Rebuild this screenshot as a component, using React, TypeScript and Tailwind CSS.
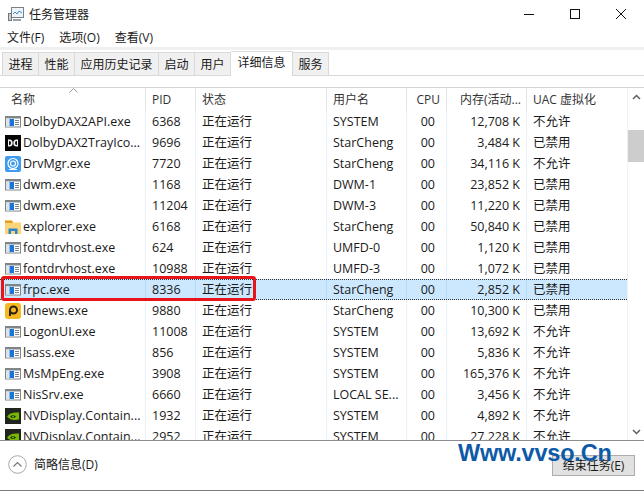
import React from "react";

const FONT = "font-['Open_Sans','Noto_Sans_CJK_SC',sans-serif]";

function ExeIcon() {
  return (
    <svg width="16" height="16" viewBox="0 0 16 16" className="shrink-0">
      <rect x="0" y="2" width="16" height="11.500" fill="#7f868a" />
      <rect x="1" y="4.500" width="14" height="8" fill="#ffffff" />
      <rect x="1" y="4.500" width="3" height="8" fill="#dfe3e6" />
      <rect x="4.500" y="5" width="4.500" height="7" fill="#1976d8" />
      <path d="M10 6.500h4M10 8.500h4M10 10.500h4" stroke="#7d8488" strokeWidth="1" />
    </svg>
  );
}
function DolbyIcon() {
  return (
    <svg width="16" height="16" viewBox="0 0 16 16" className="shrink-0">
      <rect width="16" height="16" fill="#050505" />
      <path d="M3 4.500h1.500a3.200 3.500 0 0 1 0 7H3zM13 4.500h-1.500a3.200 3.500 0 0 0 0 7H13z" fill="#f2f2f2" />
      <path d="M4 6h.5a1.500 2 0 0 1 0 4H4zM12 6h-.5a1.500 2 0 0 0 0 4H12z" fill="#111" />
    </svg>
  );
}
function DrvIcon() {
  return (
    <svg width="16" height="16" viewBox="0 0 16 16" className="shrink-0">
      <rect width="16" height="16" rx="2" fill="#3f9bf0" />
      <circle cx="8" cy="7.500" r="5" fill="none" stroke="#fff" strokeWidth="1.200" />
      <circle cx="8" cy="7.500" r="2.500" fill="none" stroke="#fff" strokeWidth="1.200" />
      <path d="M4 13.500h8" stroke="#fff" strokeWidth="1" />
    </svg>
  );
}
function FolderIcon() {
  return (
    <svg width="16" height="16" viewBox="0 0 16 16" className="shrink-0">
      <path d="M0 1.500h7l1 2H16v11.500H0z" fill="#fbd476" />
      <path d="M0 1.500h7l1 2.500H0z" fill="#e6a021" />
      <path d="M3.500 15v-5.500h9V15h-2.500v-3H6v3z" fill="#2a86d2" />
    </svg>
  );
}
function LdIcon() {
  return (
    <svg width="16" height="16" viewBox="0 0 16 16" className="shrink-0">
      <rect width="16" height="16" rx="3" fill="#f5b81f" />
      <circle cx="8.500" cy="7" r="3.500" fill="none" stroke="#2b2110" strokeWidth="2" />
      <path d="M5 7v6" stroke="#2b2110" strokeWidth="2" />
    </svg>
  );
}
function NvIcon() {
  return (
    <svg width="16" height="16" viewBox="0 0 16 16" className="shrink-0">
      <rect width="16" height="16" fill="#20241c" />
      <path d="M2 8.500C4.500 5 8 4 14 4.500v7C9 12.500 5 12 2 8.500z" fill="#76b900" />
      <path d="M5 8.500C7 6.500 9 6.500 11 8.500 9 10.500 7 10.500 5 8.500z" fill="#20241c" />
      <circle cx="8" cy="8.500" r="1" fill="#76b900" />
    </svg>
  );
}

type Row = { icon: React.ReactNode; name: string; pid: string; user: string; mem: string; uac: string; selected?: boolean };

const rows: Row[] = [
  { icon: <ExeIcon />, name: "DolbyDAX2API.exe", pid: "6368", user: "SYSTEM", mem: "12,708 K", uac: "不允许" },
  { icon: <DolbyIcon />, name: "DolbyDAX2TrayIco...", pid: "9696", user: "StarCheng", mem: "3,484 K", uac: "已禁用" },
  { icon: <DrvIcon />, name: "DrvMgr.exe", pid: "7720", user: "StarCheng", mem: "34,116 K", uac: "不允许" },
  { icon: <ExeIcon />, name: "dwm.exe", pid: "1168", user: "DWM-1", mem: "23,852 K", uac: "已禁用" },
  { icon: <ExeIcon />, name: "dwm.exe", pid: "11204", user: "DWM-3", mem: "11,220 K", uac: "已禁用" },
  { icon: <FolderIcon />, name: "explorer.exe", pid: "6168", user: "StarCheng", mem: "50,840 K", uac: "已禁用" },
  { icon: <ExeIcon />, name: "fontdrvhost.exe", pid: "624", user: "UMFD-0", mem: "1,120 K", uac: "已禁用" },
  { icon: <ExeIcon />, name: "fontdrvhost.exe", pid: "10988", user: "UMFD-3", mem: "1,072 K", uac: "已禁用" },
  { icon: <ExeIcon />, name: "frpc.exe", pid: "8336", user: "StarCheng", mem: "2,852 K", uac: "已禁用", selected: true },
  { icon: <LdIcon />, name: "ldnews.exe", pid: "9880", user: "StarCheng", mem: "10,300 K", uac: "已禁用" },
  { icon: <ExeIcon />, name: "LogonUI.exe", pid: "11008", user: "SYSTEM", mem: "13,692 K", uac: "不允许" },
  { icon: <ExeIcon />, name: "lsass.exe", pid: "856", user: "SYSTEM", mem: "5,836 K", uac: "不允许" },
  { icon: <ExeIcon />, name: "MsMpEng.exe", pid: "3908", user: "SYSTEM", mem: "165,376 K", uac: "不允许" },
  { icon: <ExeIcon />, name: "NisSrv.exe", pid: "6660", user: "LOCAL SE...", mem: "3,456 K", uac: "不允许" },
  { icon: <NvIcon />, name: "NVDisplay.Contain...", pid: "1932", user: "SYSTEM", mem: "4,892 K", uac: "不允许" },
  { icon: <NvIcon />, name: "NVDisplay.Contain...", pid: "2952", user: "SYSTEM", mem: "27,228 K", uac: "不允许" },
];

const tabs = ["进程", "性能", "应用历史记录", "启动", "用户"];

export default function App() {
  return (
    <div className={`${FONT} relative flex h-[491px] w-[644px] flex-col overflow-hidden bg-white text-[13px] leading-[21px] text-[#1a1a1a]`}>
      {/* Title bar */}
      <div className="flex h-[28px] shrink-0 items-center pl-[8px]">
        <svg width="16" height="16" viewBox="0 0 16 16" className="shrink-0">
          <rect x="3.500" y="1.500" width="12" height="10" fill="#eef3f8" stroke="#77818a" />
          <path d="M5 8l2-2 2 2 2-3 3 2" fill="none" stroke="#3b93d3" strokeWidth="1" />
          <rect x="0.500" y="7.500" width="3" height="7" fill="#c9cdd1" stroke="#777" />
          <rect x="5" y="13" width="8" height="2" fill="#9aa0a5" />
        </svg>
        <span className="ml-[5px] text-[12px]">任务管理器</span>
        <div className="ml-auto flex items-center">
          <svg width="12" height="12" viewBox="0 0 12 12" className="mr-[34px]"><path d="M1 6.500h10" stroke="#111" strokeWidth="1" /></svg>
          <svg width="12" height="12" viewBox="0 0 12 12" className="mr-[34px]"><rect x="1.500" y="1.500" width="9" height="9" fill="none" stroke="#111" /></svg>
          <svg width="12" height="12" viewBox="0 0 12 12" className="mr-[17px]"><path d="M1 1l10 10M11 1L1 11" stroke="#111" strokeWidth="1" /></svg>
        </div>
      </div>
      {/* Menu */}
      <div className="flex h-[19px] shrink-0 items-center gap-[15px] pl-[7px] text-[12px]">
        <span>文件(F)</span>
        <span>选项(O)</span>
        <span>查看(V)</span>
      </div>
      {/* Tabs */}
      <div className="flex h-[29px] shrink-0 items-end border-b border-[#d9d9d9] bg-[linear-gradient(#f0f0f0_0,#f0f0f0_3px,#fff_3px)] pl-[2px] text-[12px]">
        {tabs.map((t) => (
          <div key={t} className="flex h-[23px] items-center border border-b-0 border-l-0 border-[#d9d9d9] bg-[#f0f0f0] px-[5.500px] first:border-l">{t}</div>
        ))}
        <div className="relative z-10 -mb-px flex h-[25px] items-center border border-b-0 border-l-0 border-[#d9d9d9] bg-white px-[6.500px] pb-[3px]">详细信息</div>
        <div className="flex h-[23px] items-center border border-b-0 border-l-0 border-[#d9d9d9] bg-[#f0f0f0] px-[5.500px]">服务</div>
      </div>
      <div className="h-[11px] shrink-0" />
      {/* Table */}
      <div className="flex h-[354px] shrink-0 border-b border-t border-[#8c8c8c] border-t-[#d4d4d4]">
        <div className="min-w-0 flex-1 overflow-hidden">
          {/* Header */}
          <div className="relative flex h-[23px] items-center text-[12px] text-[#333]">
            <svg width="9" height="5" viewBox="0 0 9 5" className="absolute left-[69px] top-0"><path d="M0.500 4.500l4-4 4 4" fill="none" stroke="#999" /></svg>
            <div className="flex h-full w-[146px] items-center border-r border-[#e3e3e3] pl-[11px]">名称</div>
            <div className="flex h-full w-[50px] items-center border-r border-[#e3e3e3] pl-[6px]">PID</div>
            <div className="flex h-full w-[131px] items-center border-r border-[#e3e3e3] pl-[6px]">状态</div>
            <div className="flex h-full w-[80px] items-center border-r border-[#e3e3e3] pl-[6px]">用户名</div>
            <div className="flex h-full w-[40px] items-center justify-end border-r border-[#e3e3e3] pr-[6px]">CPU</div>
            <div className="flex h-full w-[80px] items-center justify-end border-r border-[#e3e3e3] pr-[5px]">内存(活动...</div>
            <div className="flex h-full w-[100px] items-center pl-[6px]">UAC 虚拟化</div>
          </div>
          {/* Rows */}
          {rows.map((r, i) => (
            <div
              key={i}
              className={`flex h-[21px] items-center whitespace-nowrap text-[12.500px] ${r.selected ? "border-y border-dotted border-[#333] bg-[#cce8ff]" : ""}`}
            >
              <div className={`flex h-full w-[146px] shrink-0 items-center gap-[2px] overflow-hidden border-r pl-[5px] ${r.selected ? "border-[#b5d8f5]" : "border-[#eaf2fb]"}`}>
                {r.icon}
                <span>{r.name}</span>
              </div>
              <div className={`flex h-full w-[50px] shrink-0 items-center border-r pl-[6px] ${r.selected ? "border-[#b5d8f5]" : "border-[#eaf2fb]"}`}>{r.pid}</div>
              <div className={`flex h-full w-[131px] shrink-0 items-center border-r pl-[6px] ${r.selected ? "border-[#b5d8f5]" : "border-[#eaf2fb]"}`}>正在运行</div>
              <div className={`flex h-full w-[80px] shrink-0 items-center overflow-hidden border-r pl-[6px] ${r.selected ? "border-[#b5d8f5]" : "border-[#eaf2fb]"}`}>{r.user}</div>
              <div className={`flex h-full w-[40px] shrink-0 items-center justify-end border-r pr-[11px] ${r.selected ? "border-[#b5d8f5]" : "border-[#eaf2fb]"}`}>00</div>
              <div className={`flex h-full w-[80px] shrink-0 items-center justify-end border-r pr-[6px] ${r.selected ? "border-[#b5d8f5]" : "border-[#eaf2fb]"}`}>{r.mem}</div>
              <div className="flex h-full w-[100px] shrink-0 items-center pl-[6px]">{r.uac}</div>
            </div>
          ))}
        </div>
        {/* Scrollbar */}
        <div className="flex w-[17px] shrink-0 flex-col items-center border-l border-[#f0f0f0] bg-white">
          <div className="flex h-[18px] w-full items-center justify-center">
            <svg width="9" height="6" viewBox="0 0 9 6"><path d="M1 5l3.500-3.500L8 5" fill="none" stroke="#606060" strokeWidth="1.500" /></svg>
          </div>
          <div className="mt-[24px] h-[32px] w-full bg-[#cdcdcd]" />
          <div className="mt-auto flex h-[16px] w-full items-center justify-center">
            <svg width="9" height="6" viewBox="0 0 9 6"><path d="M1 1l3.500 3.500L8 1" fill="none" stroke="#606060" strokeWidth="1.500" /></svg>
          </div>
        </div>
      </div>
      {/* Footer */}
      <div className="flex h-[50px] shrink-0 items-center border-b border-[#7a7a7a] pb-[2px] pl-[8px] pr-[9px]">
        <svg width="19" height="19" viewBox="0 0 19 19" className="shrink-0">
          <circle cx="9.500" cy="9.500" r="8.800" fill="none" stroke="#a8a8a8" />
          <path d="M5.500 11.500l4-4 4 4" fill="none" stroke="#777" strokeWidth="1.200" />
        </svg>
        <span className="ml-[7px] text-[12px]">简略信息(D)</span>
        <button className="ml-auto mt-[1px] flex h-[21px] w-[83px] items-center justify-center border border-[#adadad] bg-[#e1e1e1] text-[12px]">结束任务(E)</button>
      </div>
      {/* Annotation: red highlight */}
      <div className="absolute left-[1px] top-[276px] h-[25px] w-[255px] rounded-[3px] border-[3px] border-[#e8141a]" />
      {/* Watermark */}
      <div className="absolute left-[458px] top-[438px] font-['Liberation_Sans',sans-serif] text-[23.500px] font-bold leading-[30px] tracking-[-0.2px] text-[#0d5aa7]">Www.vvso.Cn</div>
    </div>
  );
}
